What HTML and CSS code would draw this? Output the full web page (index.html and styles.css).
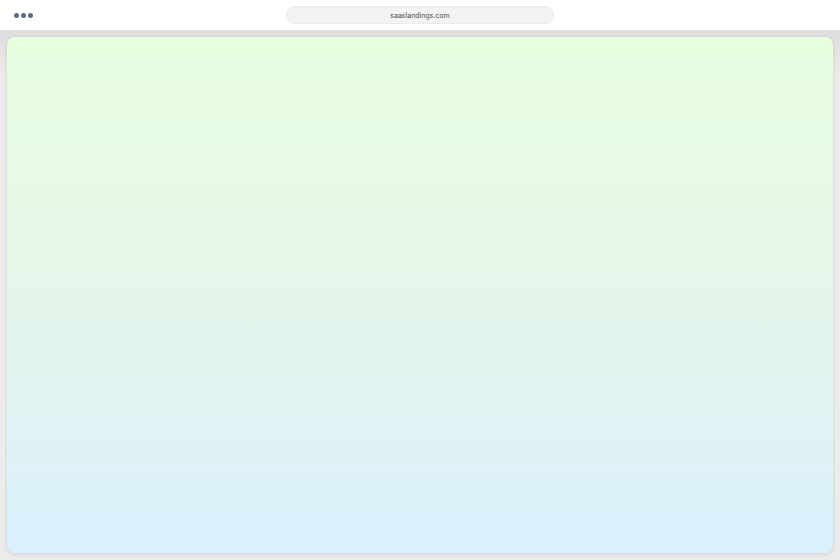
FILE: index.html
```html
<!DOCTYPE html>
<html>
<head>
<meta charset="utf-8">
<link rel="stylesheet" href="styles.css">
</head>
<body>
<div class="browser">
  <header class="topbar">
    <div class="dots"><span></span><span></span><span></span></div>
    <div class="url">saaslandings.com</div>
    <div class="spacer"></div>
  </header>
  <main class="stage">
    <div class="panel"></div>
  </main>
</div>
</body>
</html>
```
FILE: styles.css
```css
* { box-sizing: border-box; }
html, body { margin: 0; padding: 0; }
body { width: 840px; height: 560px; overflow: hidden; font-family: Inter, "Liberation Sans", sans-serif; background: #e8e8e8; }
.browser { display: flex; flex-direction: column; height: 560px; }
.topbar { height: 30px; background: #ffffff; display: flex; align-items: center; padding: 0 14px; }
.dots { display: flex; gap: 2px; width: 272px; }
.dots span { width: 5px; height: 5px; border-radius: 50%; background: #5b6a86; }
.url { width: 268px; height: 18px; border-radius: 9px; background: #f3f3f4; border: 1px solid #ebebec; font-size: 7px; color: #4d4d4d; display: flex; align-items: center; justify-content: center; }
.spacer { flex: 1; }
.stage { flex: 1; padding: 7px; background: linear-gradient(#dedede, #ececec 10%, #ebebeb); }
.panel { height: 516px; border-radius: 8px; background: linear-gradient(#e8fee0, #e4f6ea 50%, #dbf0fe); box-shadow: 0 1px 4px rgba(0,0,0,0.12); }
```
